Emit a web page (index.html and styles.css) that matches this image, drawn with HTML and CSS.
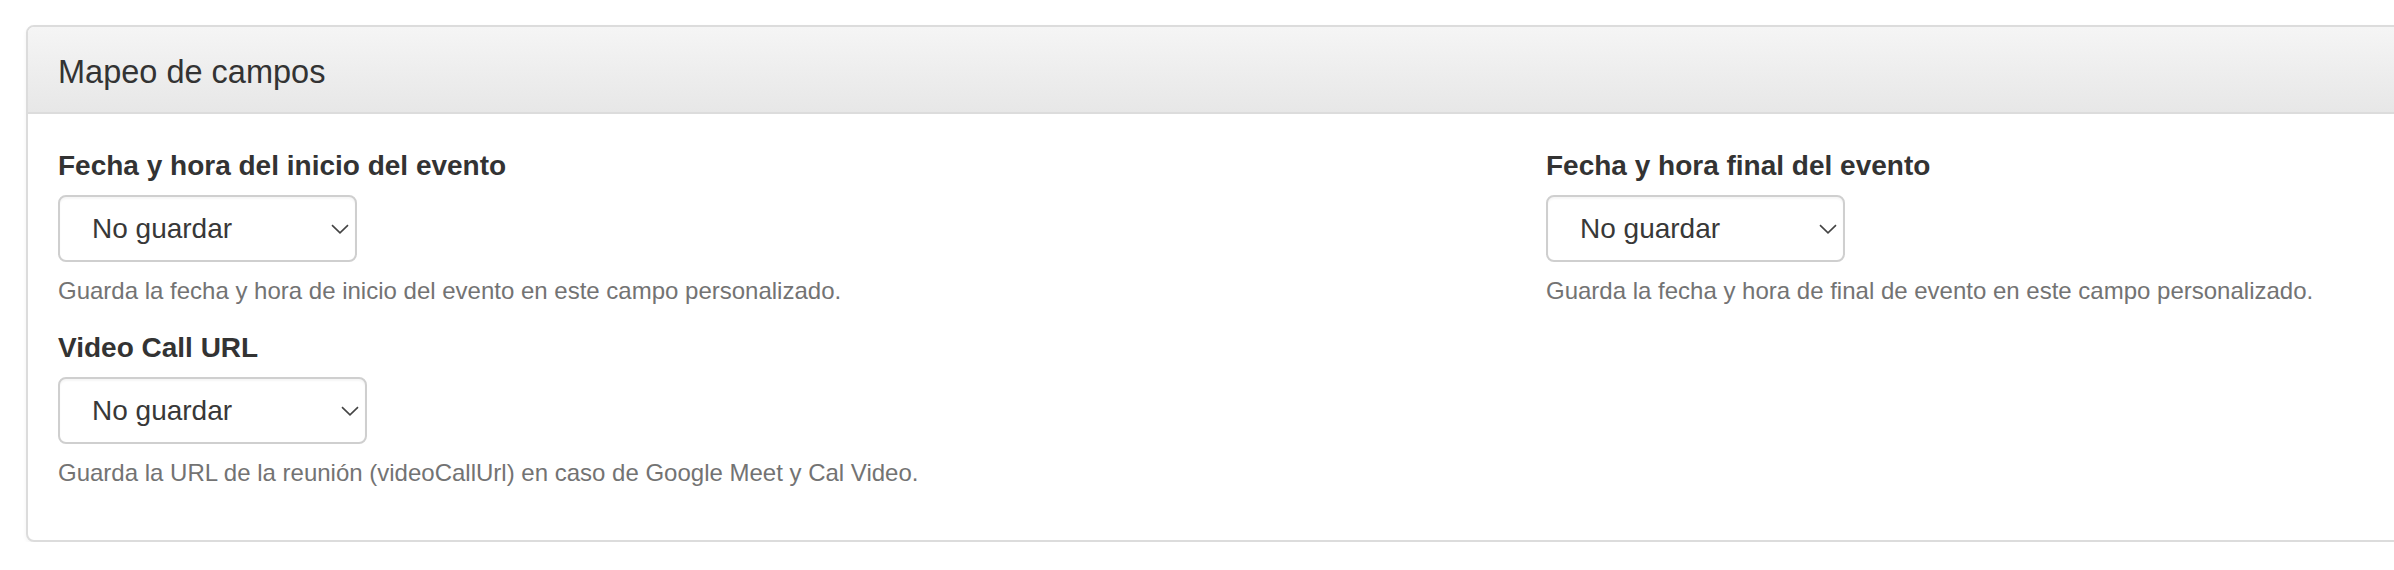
FILE: index.html
```html
<!DOCTYPE html>
<html lang="es">
<head>
<meta charset="utf-8">
<title>Mapeo de campos</title>
<link rel="stylesheet" href="styles.css">
</head>
<body>
<div class="page">
  <div class="panel">
    <div class="panel-heading">
      <h3 class="panel-title">Mapeo de campos</h3>
    </div>
    <div class="panel-body">
      <div class="row">
        <div class="form-group">
          <label class="field-label">Fecha y hora del inicio del evento</label>
          <div class="select-wrap select-w1">
            <select class="form-control"><option>No guardar</option></select>
            <svg class="chevron" width="18" height="10" viewBox="0 0 18 10"><path d="M1 1.2 L9 8.8 L17 1.2" fill="none" stroke="#444" stroke-width="1.6"/></svg>
          </div>
          <p class="help-block">Guarda la fecha y hora de inicio del evento en este campo personalizado.</p>
        </div>
        <div class="form-group">
          <label class="field-label">Fecha y hora final del evento</label>
          <div class="select-wrap select-w1">
            <select class="form-control"><option>No guardar</option></select>
            <svg class="chevron" width="18" height="10" viewBox="0 0 18 10"><path d="M1 1.2 L9 8.8 L17 1.2" fill="none" stroke="#444" stroke-width="1.6"/></svg>
          </div>
          <p class="help-block">Guarda la fecha y hora de final de evento en este campo personalizado.</p>
        </div>
      </div>
      <div class="row">
        <div class="form-group">
          <label class="field-label">Video Call URL</label>
          <div class="select-wrap select-w2">
            <select class="form-control"><option>No guardar</option></select>
            <svg class="chevron" width="18" height="10" viewBox="0 0 18 10"><path d="M1 1.2 L9 8.8 L17 1.2" fill="none" stroke="#444" stroke-width="1.6"/></svg>
          </div>
          <p class="help-block">Guarda la URL de la reunión (videoCallUrl) en caso de Google Meet y Cal Video.</p>
        </div>
      </div>
    </div>
  </div>
</div>
</body>
</html>
```
FILE: styles.css
```css
html, body {
  margin: 0;
  padding: 0;
  background: #ffffff;
  overflow: hidden;
}
body {
  font-family: "Liberation Sans", Arial, Helvetica, sans-serif;
  color: #333333;
}
.page {
  padding: 25px 0 0 26px;
}
.panel {
  width: 2980px;
  box-sizing: border-box;
  border: 2px solid #dcdcdc;
  border-radius: 8px;
  background: #ffffff;
  box-shadow: 0 2px 4px rgba(0, 0, 0, 0.05);
}
.panel-heading {
  padding: 23px 30px 17px 30px;
  background: linear-gradient(to bottom, #f5f5f5 0%, #e7e7e7 100%);
  border-bottom: 2px solid #dcdcdc;
  border-radius: 6px 6px 0 0;
}
.panel-title {
  margin: 0;
  font-size: 32.5px;
  font-weight: normal;
  line-height: 45px;
  color: #333333;
}
.panel-body {
  padding: 32px 30px 30px 30px;
}
.row {
  display: grid;
  grid-template-columns: 1fr 1fr;
  column-gap: 60px;
}
.form-group {
  display: flex;
  flex-direction: column;
  align-items: flex-start;
}
.field-label {
  display: block;
  font-size: 28px;
  font-weight: bold;
  line-height: 40px;
  margin-bottom: 9px;
  color: #333333;
}
.select-wrap {
  position: relative;
  height: 67px;
}
.select-w1 { width: 299px; }
.select-w2 { width: 309px; }
.form-control {
  -webkit-appearance: none;
  appearance: none;
  width: 100%;
  height: 100%;
  box-sizing: border-box;
  margin: 0;
  padding: 0 40px 0 32px;
  font-family: "Liberation Sans", Arial, Helvetica, sans-serif;
  font-size: 28px;
  color: #383838;
  background: #ffffff;
  border: 2px solid #cfcfcf;
  border-radius: 8px;
  box-shadow: inset 0 2px 2px rgba(0, 0, 0, 0.04);
  outline: none;
}
.chevron {
  position: absolute;
  right: 8px;
  top: 29px;
  pointer-events: none;
}
.help-block {
  margin: 12px 0 20px 0;
  font-size: 24px;
  line-height: 34px;
  color: #737373;
}
```
